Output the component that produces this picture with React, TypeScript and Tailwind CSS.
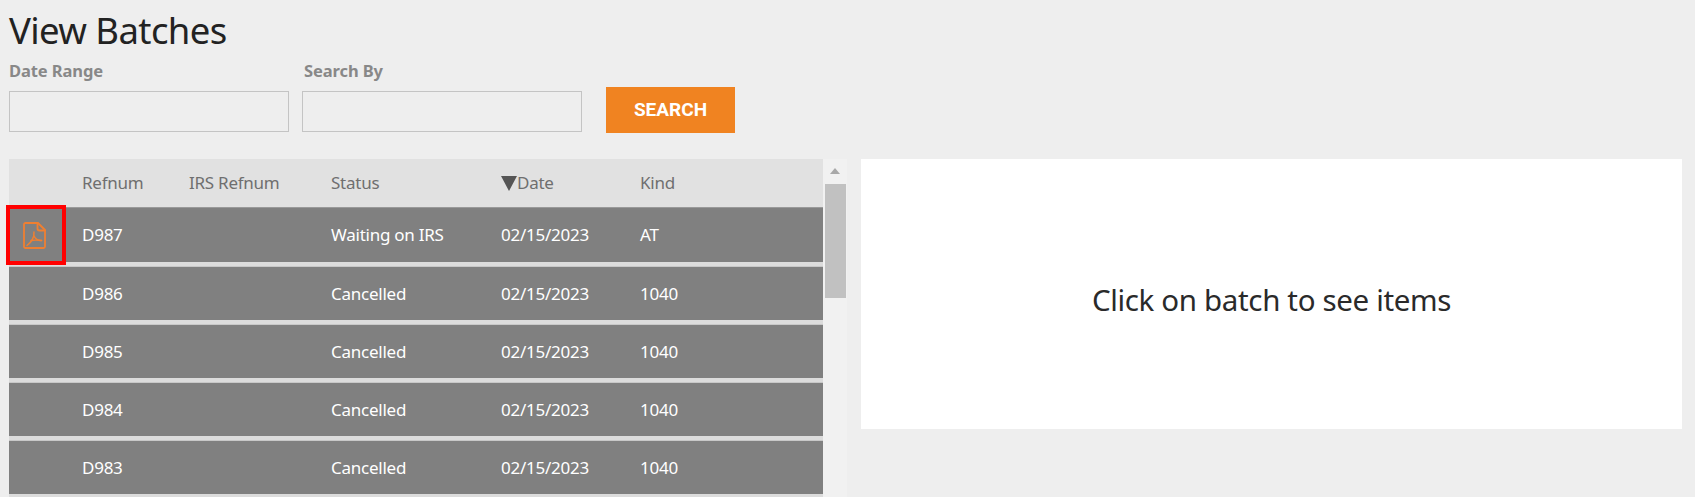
import React from 'react'

interface Batch {
    refnum: string
    status: string
    date: string
    kind: string
}

const batches: Batch[] = [
    { refnum: 'D987', status: 'Waiting on IRS', date: '02/15/2023', kind: 'AT' },
    { refnum: 'D986', status: 'Cancelled', date: '02/15/2023', kind: '1040' },
    { refnum: 'D985', status: 'Cancelled', date: '02/15/2023', kind: '1040' },
    { refnum: 'D984', status: 'Cancelled', date: '02/15/2023', kind: '1040' },
    { refnum: 'D983', status: 'Cancelled', date: '02/15/2023', kind: '1040' },
]

function PdfIcon() {
    return (
        <svg width="23" height="27" viewBox="0 0 23 27" fill="none" stroke="#ef7f31" strokeWidth="1.8" strokeLinejoin="round" strokeLinecap="round">
            <path d="M2.5 1H15l7 7v16.500a1.500 1.500 0 0 1-1.500 1.500h-18A1.500 1.500 0 0 1 1 24.500v-22A1.500 1.500 0 0 1 2.500 1z" />
            <path d="M14.500 1v5.500a2 2 0 0 0 2 2H22" />
            <path d="M11 10c.3 5-2.500 10-7 13.500" strokeWidth="1.500" />
            <path d="M11 14c1 2.500 3.500 4.500 7.500 4.500" strokeWidth="1.500" />
            <path d="M8 18.500c3-.5 6.500-.5 10.500 0" strokeWidth="1.500" />
        </svg>
    )
}

export default function App() {
    return (
        <div className="h-[497px] w-[1695px] overflow-hidden bg-[#eeeeee] font-['Noto_Sans',sans-serif]">
            <h1 className="h-[63px] pl-[9px] pt-[6px] text-[36.5px] leading-[48px] tracking-[-0.6px] text-[#222222]">View Batches</h1>

            <div className="flex h-[95px] items-start pl-[9px]">
                <div className="w-[293px]">
                    <label className="block h-[28px] text-[16.5px] font-bold leading-[16px] tracking-[-0.1px] text-[#888888]">Date Range</label>
                    <input className="block h-[41px] w-[280px] border border-[#c4c4c4] bg-[#eeeeee]" />
                </div>
                <div className="w-[304px]">
                    <label className="block h-[28px] pl-[2px] text-[16.5px] font-bold leading-[16px] tracking-[-0.1px] text-[#888888]">Search By</label>
                    <input className="block h-[41px] w-[280px] border border-[#c4c4c4] bg-[#eeeeee]" />
                </div>
                <button className="mt-[24px] h-[46px] w-[129px] bg-[#f08321] font-['Roboto',sans-serif] text-[19px] font-bold text-white">SEARCH</button>
            </div>

            <div className="mt-[1px] flex items-start pl-[9px]">
                <div className="relative w-[814px]">
                    <div className="flex h-[49px] items-center border-b border-[#9a9a9a] bg-[#e1e1e1] text-[17px] tracking-[-0.25px] text-[#6f6f6f]">
                        <div className="w-[73px]" />
                        <div className="w-[107px]">Refnum</div>
                        <div className="w-[142px]">IRS Refnum</div>
                        <div className="w-[170px]">Status</div>
                        <div className="flex w-[139px] items-center">
                            <span className="mt-[1px] h-0 w-0 border-x-[8px] border-t-[15px] border-x-transparent border-t-[#555555]" />
                            <span>Date</span>
                        </div>
                        <div>Kind</div>
                    </div>
                    {batches.map((batch, index) => (
                        <div key={batch.refnum} className={`flex h-[58px] items-center border-b-[4px] border-b-[#dcdcdc] bg-[#808080] text-[17px] tracking-[-0.25px] text-white ${index === 0 ? '' : 'border-t border-t-[#c8c8c8]'}`}>
                            <div className="w-[73px] pl-[14px]">{index === 0 && <PdfIcon />}</div>
                            <div className="w-[249px]">{batch.refnum}</div>
                            <div className="w-[170px]">{batch.status}</div>
                            <div className="w-[139px]">{batch.date}</div>
                            <div>{batch.kind}</div>
                        </div>
                    ))}
                    <div className="absolute left-[-3px] top-[46px] h-[60px] w-[60px] border-[4px] border-[#ff0000]" />
                </div>

                <div className="flex h-[340px] w-[24px] flex-col items-center bg-[#f1f1f1]">
                    <span className="mt-[9px] h-0 w-0 border-x-[5px] border-b-[6px] border-x-transparent border-b-[#a8a8a8]" />
                    <div className="mt-[10px] h-[114px] w-[21px] bg-[#c1c1c1]" />
                </div>

                <div className="ml-[14px] flex h-[270px] w-[821px] items-center justify-center bg-white pt-[13px] text-[29.5px] tracking-[-0.35px] text-[#2a2a2a]">
                    Click on batch to see items
                </div>
            </div>
        </div>
    )
}
